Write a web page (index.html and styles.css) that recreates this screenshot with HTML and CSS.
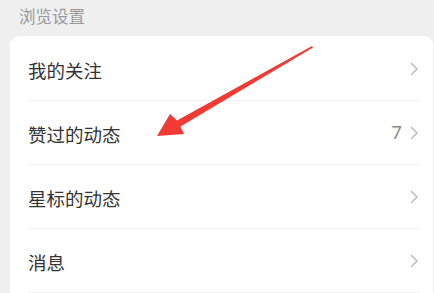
FILE: index.html
```html
<!DOCTYPE html>
<html lang="zh">
<head>
<meta charset="utf-8">
<link rel="stylesheet" href="styles.css">
</head>
<body>
<div class="page">
  <div class="section-title">浏览设置</div>
  <div class="card">
    <div class="row"><span class="label">我的关注</span><span class="right"><svg class="chev" viewBox="0 0 8 14"><path d="M1 1 L7 7 L1 13" /></svg></span></div>
    <div class="row"><span class="label">赞过的动态</span><span class="right"><span class="count">7</span><svg class="chev" viewBox="0 0 8 14"><path d="M1 1 L7 7 L1 13" /></svg></span></div>
    <div class="row"><span class="label">星标的动态</span><span class="right"><svg class="chev" viewBox="0 0 8 14"><path d="M1 1 L7 7 L1 13" /></svg></span></div>
    <div class="row"><span class="label">消息</span><span class="right"><svg class="chev" viewBox="0 0 8 14"><path d="M1 1 L7 7 L1 13" /></svg></span></div>
  </div>
  <svg class="arrow" viewBox="0 0 434 293" width="434" height="293">
    <polygon points="157,136 170,114 177,120.5 312,46 313,47.5 180.5,126.5 184,134" fill="#f03a34"/>
  </svg>
</div>
</body>
</html>
```
FILE: styles.css
```css
html, body {
  margin: 0;
  padding: 0;
  background: #efefef;
  font-family: "Noto Sans CJK SC", "Noto Sans", sans-serif;
}
.page {
  position: relative;
  width: 434px;
  height: 293px;
  overflow: hidden;
}
.section-title {
  padding: 4px 0 0 19px;
  height: 36px;
  box-sizing: border-box;
  font-size: 16.5px;
  line-height: 24px;
  color: #9a9a9a;
}
.card {
  margin-left: 10px;
  margin-right: 1px;
  background: #fff;
  border-radius: 9px 9px 0 0;
  padding: 1px 13px 0 18px;
}
.row {
  height: 63px;
  border-bottom: 1px solid #f0f0f0;
  display: flex;
  align-items: center;
  justify-content: space-between;
}
.label {
  font-size: 18.5px;
  color: #333;
  padding-top: 2px;
}
.right {
  display: flex;
  align-items: center;
  gap: 8px;
  padding-right: 2px;
}
.count {
  font-size: 18.5px;
  color: #888;
  font-family: "Roboto", "Noto Sans", sans-serif;
}
.chev {
  width: 8px;
  height: 14px;
  fill: none;
  stroke: #bbb;
  stroke-width: 1.5;
}
.arrow {
  position: absolute;
  left: 0;
  top: 0;
}
```
